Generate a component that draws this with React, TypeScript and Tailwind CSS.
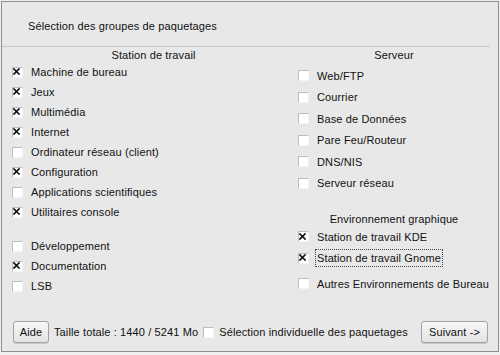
import React from "react";

type Item = { label: string; checked?: boolean; focus?: boolean };

const Check = ({ checked }: { checked?: boolean }) => (
  <span className="relative flex h-[11px] w-[11px] shrink-0 items-center justify-center border border-[#bdbdbd] border-b-[#f4f4f4] border-r-[#f4f4f4] bg-white">
    {checked && (
      <svg width="7" height="7" viewBox="0 0 7 7" className="-ml-[2px] -mt-px">
        <path d="M1 1 L6 6 M6 1 L1 6" stroke="#111" strokeWidth="1.7" strokeLinecap="square" />
      </svg>
    )}
  </span>
);

const Row = ({ item, h }: { item: Item; h: string }) => (
  <div className={`flex items-center gap-2 ${h}`}>
    <Check checked={item.checked} />
    {item.focus ? (
      <span className="-ml-[2px] border border-dotted border-[#444] px-px leading-[16px]">{item.label}</span>
    ) : (
      <span>{item.label}</span>
    )}
  </div>
);

const station: Item[] = [
  { label: "Machine de bureau", checked: true },
  { label: "Jeux", checked: true },
  { label: "Multimédia", checked: true },
  { label: "Internet", checked: true },
  { label: "Ordinateur réseau (client)" },
  { label: "Configuration", checked: true },
  { label: "Applications scientifiques" },
  { label: "Utilitaires console", checked: true },
];

const extra: Item[] = [
  { label: "Développement" },
  { label: "Documentation", checked: true },
  { label: "LSB" },
];

const serveur: Item[] = [
  { label: "Web/FTP" },
  { label: "Courrier" },
  { label: "Base de Données" },
  { label: "Pare Feu/Routeur" },
  { label: "DNS/NIS" },
  { label: "Serveur réseau" },
];

const Button = ({ children, className }: { children: React.ReactNode; className: string }) => (
  <button
    className={`flex h-[22px] items-center justify-center rounded-[3px] border border-[#a2a2a2] bg-gradient-to-b from-[#f8f8f8] to-[#e2e2e2] shadow-[0_1px_0_#c8c8c8] ${className}`}
  >
    {children}
  </button>
);

export default function App() {
  return (
    <div
      className="h-[355px] w-[500px] bg-[#efefef] pb-[3px] pl-px pr-px pt-px text-[11px] tracking-[0.12px] text-[#111]"
      style={{ fontFamily: '"Liberation Sans", Arial, sans-serif' }}
    >
      <div className="flex h-full flex-col border border-[#8e8e8e] bg-[#e8e8e8]">
        <div className="pl-[26px] pt-4 leading-4">Sélection des groupes de paquetages</div>
        <div className="mr-[8px] mt-3 h-px bg-[#c6c6c6]" />

        <div className="flex flex-1">
          <div className="w-[296px]">
            <div className="mt-px pl-[7px] text-center leading-[14px]">Station de travail</div>
            <div className="pl-[10px]">
              {station.map((it) => (
                <Row key={it.label} item={it} h="h-5" />
              ))}
              <div className="mt-[14px]">
                {extra.map((it) => (
                  <Row key={it.label} item={it} h="h-5" />
                ))}
              </div>
            </div>
          </div>

          <div className="w-[192px]">
            <div className="mt-px text-center leading-[14px]">Serveur</div>
            <div className="mt-[3px]">
              {serveur.map((it) => (
                <Row key={it.label} item={it} h="h-[21.5px]" />
              ))}
            </div>
            <div className="mt-[18px] text-center leading-[14px]">Environnement graphique</div>
            <Row item={{ label: "Station de travail KDE", checked: true }} h="h-[21.5px]" />
            <Row item={{ label: "Station de travail Gnome", checked: true, focus: true }} h="h-[21.5px]" />
            <div className="mt-1">
              <Row item={{ label: "Autres Environnements de Bureau" }} h="h-[21.5px]" />
            </div>
          </div>
        </div>

        <div className="flex items-center pb-2 pl-[11px] pr-[10px]">
          <Button className="w-[36px]">Aide</Button>
          <span className="ml-[5px]">Taille totale : 1440 / 5241 Mo</span>
          <span className="ml-[5px]">
            <Check />
          </span>
          <span className="ml-[5px]">Sélection individuelle des paquetages</span>
          <Button className="ml-auto w-[67px]">Suivant -&gt;</Button>
        </div>
      </div>
    </div>
  );
}
